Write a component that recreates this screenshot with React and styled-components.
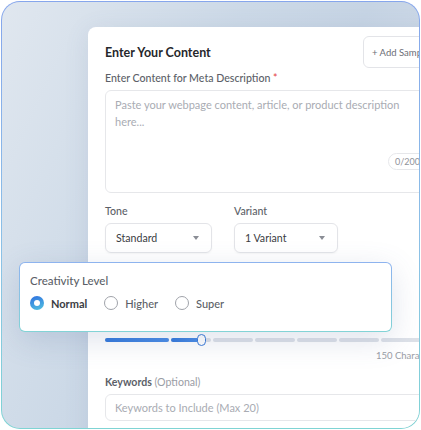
import styled, { createGlobalStyle } from "styled-components";

const GlobalStyle = createGlobalStyle`
  *, *::before, *::after { box-sizing: border-box; }
  body {
    margin: 0;
    background: #fff;
    font-family: Lato, "Liberation Sans", sans-serif;
  }
`;

const Frame = styled.div`
  position: relative;
  width: 419px;
  height: 428px;
  margin: 1px;
  border: 1.5px solid transparent;
  border-radius: 19px;
  background:
    linear-gradient(115deg, #e0e7ef 0%, #ccd9e7 40%, #c6d4e4 60%, #d9e1eb 100%) padding-box,
    linear-gradient(180deg, #86a6ec 0%, #8cc2e6 60%, #7fd4d4 100%) border-box;
  overflow: hidden;
`;

const Card = styled.section`
  margin: 25px 0 0 86px;
  width: 372px;
  height: 440px;
  background: #fff;
  border-radius: 8px;
  box-shadow: 0 4px 24px rgba(90, 110, 150, 0.12);
  padding: 9px 17px 0 17px;
`;

const Header = styled.div`
  display: flex;
  justify-content: space-between;
  align-items: center;
  height: 32px;
`;

const Title = styled.h2`
  margin: 0;
  font-size: 12.5px;
  font-weight: 700;
  color: #26272b;
`;

const GhostButton = styled.button`
  width: 80px;
  height: 32px;
  padding: 0 0 0 8px;
  text-align: left;
  border: 1px solid #e3e4e8;
  border-radius: 6px;
  background: #fff;
  font-family: inherit;
  font-size: 9.5px;
  color: #6b6e76;
  white-space: nowrap;
`;

const Label = styled.div`
  font-size: ${(p) => p.$size || 10.6}px;
  font-weight: ${(p) => (p.$bold ? 700 : 500)};
  color: #5c5f68;
  margin: ${(p) => p.$m || "0"};
  span.req { color: #e5484d; }
  span.opt { font-weight: 400; color: #9a9da5; }
`;

const TextArea = styled.div`
  position: relative;
  height: 103px;
  border: 1px solid #e6e7ea;
  border-radius: 6px;
  padding: 5px 9px;
  font-size: 11px;
  line-height: 17px;
  color: #a9acb3;
`;

const Counter = styled.span`
  position: absolute;
  left: 282px;
  bottom: 22px;
  height: 17px;
  padding: 0 6px;
  border: 1px solid #e6e7ea;
  border-radius: 9px;
  font-size: 9px;
  line-height: 15px;
  color: #8f929a;
`;

const Row = styled.div`
  display: flex;
  gap: 22px;
  margin-top: 12px;
`;

const Field = styled.div`
  display: flex;
  flex-direction: column;
  gap: 6px;
`;

const Select = styled.div`
  width: ${(p) => p.$w}px;
  height: 30px;
  display: flex;
  align-items: center;
  justify-content: space-between;
  padding: 0 12px 0 10px;
  border: 1px solid #e3e4e8;
  border-radius: 6px;
  box-shadow: 0 1px 2px rgba(0, 0, 0, 0.04);
  font-size: 10.6px;
  color: #3a3c42;
  &::after {
    content: "";
    border-left: 3px solid transparent;
    border-right: 3px solid transparent;
    border-top: 4px solid #8a8d95;
  }
`;

const Slider = styled.div`
  display: flex;
  gap: 2px;
  margin-top: 85px;
  align-items: center;
`;

const Seg = styled.div`
  position: relative;
  flex: none;
  width: ${(p) => p.$w}px;
  height: 4px;
  border-radius: 2px;
  background: #dde1e8;
`;

const Fill = styled.div`
  position: absolute;
  left: 0;
  top: 0;
  bottom: 0;
  border-radius: 2px;
  background: linear-gradient(90deg, #3479dc, #4a8ce6);
`;

const Thumb = styled.div`
  position: absolute;
  top: -4px;
  width: 9px;
  height: 12px;
  border-radius: 5px;
  border: 1.5px solid #3a7ad8;
  background: #fff;
`;

const Hint = styled.div`
  padding-left: 271px;
  margin-top: 8px;
  font-size: 9.5px;
  color: #9a9da5;
  white-space: nowrap;
`;

const Input = styled.div`
  height: 27px;
  margin-top: 6px;
  border: 1px solid #e6e7ea;
  border-radius: 6px;
  padding: 0 9px;
  display: flex;
  align-items: center;
  font-size: 11px;
  color: #a9acb3;
`;

const Callout = styled.div`
  position: absolute;
  left: 17px;
  top: 260px;
  width: 373px;
  height: 70px;
  border: 1px solid transparent;
  border-radius: 6px;
  background:
    linear-gradient(#fff, #fff) padding-box,
    linear-gradient(180deg, #8eb3ef 0%, #82d3d6 100%) border-box;
  box-shadow: 0 8px 30px rgba(80, 100, 150, 0.18);
  padding: 11px 0 0 10px;
`;

const Radios = styled.div`
  display: flex;
  gap: 17px;
  margin-top: 9px;
`;

const Radio = styled.label`
  display: flex;
  align-items: center;
  gap: 7px;
  font-size: 11px;
  font-weight: ${(p) => (p.$on ? 700 : 500)};
  color: ${(p) => (p.$on ? "#3b3d44" : "#5c5f68")};
  &::before {
    content: "";
    flex: none;
    width: 14px;
    height: 14px;
    border-radius: 50%;
    border: ${(p) => (p.$on ? "4px solid transparent" : "1.3px solid #a0a3aa")};
    background: ${(p) =>
      p.$on
        ? "linear-gradient(#fff,#fff) padding-box, linear-gradient(160deg,#2f6fe0,#52c4e0) border-box"
        : "#fff"};
  }
`;

export default function App() {
  const segs = [64, 40, 40, 40, 40, 40, 40];
  return (
    <>
      <GlobalStyle />
      <Frame>
        <Card>
          <Header>
            <Title>Enter Your Content</Title>
            <GhostButton>+ Add Sample</GhostButton>
          </Header>
          <Label $m="4px 0 6px">
            Enter Content for Meta Description <span className="req">*</span>
          </Label>
          <TextArea>
            Paste your webpage content, article, or product description
            <br />
            here...
            <Counter>0/2000</Counter>
          </TextArea>
          <Row>
            <Field>
              <Label>Tone</Label>
              <Select $w={107}>Standard</Select>
            </Field>
            <Field>
              <Label>Variant</Label>
              <Select $w={104}>1 Variant</Select>
            </Field>
          </Row>
          <Slider>
            {segs.map((w, i) => (
              <Seg key={i} $w={w}>
                {i === 0 && <Fill style={{ width: w }} />}
                {i === 1 && (
                  <>
                    <Fill style={{ width: 28 }} />
                    <Thumb style={{ left: 26 }} />
                  </>
                )}
              </Seg>
            ))}
          </Slider>
          <Hint>150 Characters</Hint>
          <Label $bold $m="15px 0 0">
            Keywords <span className="opt">(Optional)</span>
          </Label>
          <Input>Keywords to Include (Max 20)</Input>
        </Card>
        <Callout>
          <Label $size={11.5}>Creativity Level</Label>
          <Radios>
            <Radio $on>Normal</Radio>
            <Radio>Higher</Radio>
            <Radio>Super</Radio>
          </Radios>
        </Callout>
      </Frame>
    </>
  );
}
